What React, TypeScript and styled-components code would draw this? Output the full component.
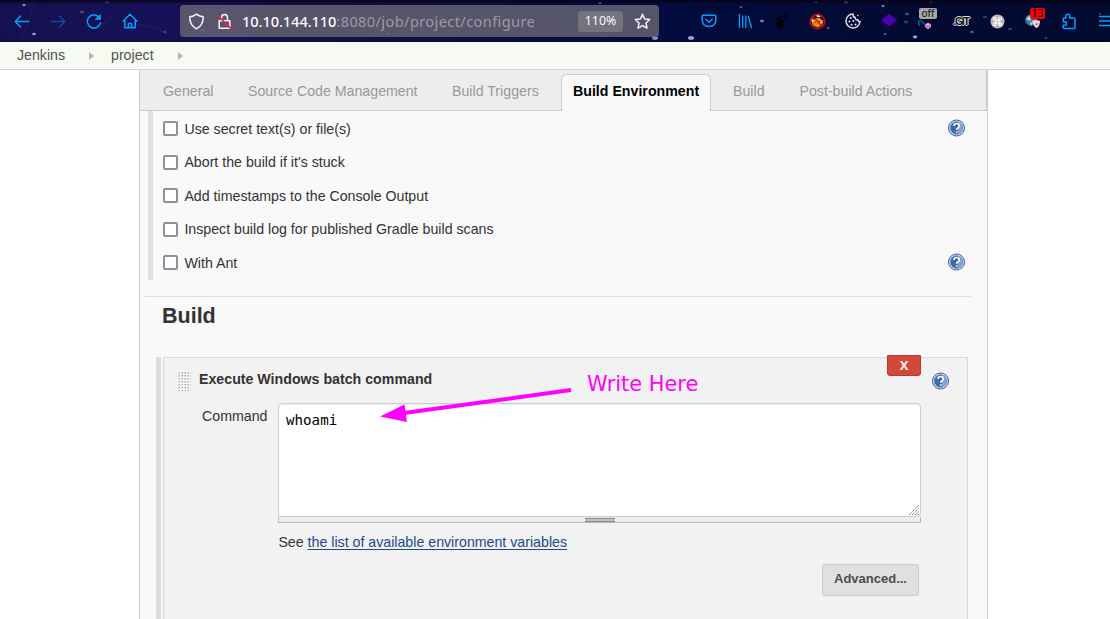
import React from 'react';
import styled, { createGlobalStyle } from 'styled-components';

const GlobalStyle = createGlobalStyle`
  * { box-sizing: border-box; }
  body { margin: 0; background: #fff; overflow: hidden; }
  #root { font-family: "Liberation Sans", Arial, sans-serif; font-size: 14.2px; color: #333; }
`;

const Page = styled.div`
  position: relative;
  width: 1110px;
  height: 619px;
  overflow: hidden;
  display: flex;
  flex-direction: column;
`;

/* Browser toolbar */
const Toolbar = styled.header`
  position: relative;
  flex: none;
  height: 42px;
  display: flex;
  align-items: center;
  padding-left: 4px;
  background: linear-gradient(90deg, #15104f 0, #171259 210px, #101047 420px, #060d45 570px, #030b3c 720px, #030a32 900px, #020a30 100%);
  &::after {
    content: "";
    position: absolute;
    inset: 0;
    background: linear-gradient(180deg, rgba(8, 0, 20, .85) 0, rgba(8, 0, 20, .6) 2px, transparent 4px, transparent 39px, rgba(0, 0, 20, .35) 42px);
  }
`;

const Stars = styled.svg`
  position: absolute;
  left: 0;
  top: 0;
`;

const Slot = styled.div`
  position: relative;
  flex: none;
  width: 36px;
  height: 42px;
  display: flex;
  align-items: center;
  justify-content: center;
  svg { display: block; }
`;

const AddressBar = styled.div`
  position: relative;
  flex: none;
  width: 479px;
  height: 32px;
  margin: 0 32px 0 32px;
  display: flex;
  align-items: center;
  border-radius: 4px;
  background: rgba(101, 99, 112, .84);
  padding-left: 8px;
`;

const UrlIcon = styled.span<{ $gap: number }>`
  display: flex;
  margin-right: ${(p) => p.$gap}px;
`;

const Url = styled.div`
  width: 336px;
  white-space: nowrap;
  font: 14.6px/20px "Noto Sans", sans-serif;
  letter-spacing: .38px;
  color: #9b9aa5;
`;

const Host = styled.span`
  color: #fbfbfe;
  font-weight: 500;
  letter-spacing: -.08px;
`;

const Zoom = styled.div`
  width: 45px;
  height: 21px;
  border-radius: 3px;
  background: #74737f;
  color: #fbfbfe;
  font: 12.3px/20px "Noto Sans", sans-serif;
  text-align: center;
  margin-right: 11px;
`;

const Badge = styled.span<{ $red?: boolean }>`
  position: absolute;
  top: 8px;
  left: ${(p) => (p.$red ? 15 : 12)}px;
  width: ${(p) => (p.$red ? 15 : 18)}px;
  height: 11px;
  border-radius: 2px;
  background: ${(p) => (p.$red ? '#f00404' : '#a6a6a6')};
  color: ${(p) => (p.$red ? '#300' : '#111')};
  font: 10px/11px "Noto Sans", sans-serif;
  text-align: center;
`;

const GitMark = styled.span`
  font: bold 10.5px/16px "Liberation Sans", sans-serif;
  letter-spacing: -1.2px;
  color: #111;
  text-shadow: -1px 0 #ddd, 1px 0 #ddd, 0 -1px #ddd, 0 1px #ddd;
`;

/* Breadcrumbs */
const Breadcrumbs = styled.nav`
  flex: none;
  height: 28px;
  display: flex;
  align-items: center;
  padding: 0 0 1px 17px;
  background: #f6faf2;
  border-bottom: 1px solid #d3d7cf;
  color: #4f5350;
`;

const Crumb = styled.span<{ $width: number }>`
  width: ${(p) => p.$width}px;
`;

const CrumbArrow = styled.span`
  margin: 2px 17px 0 0;
  border-left: 5px solid #b5b8b5;
  border-top: 4px solid transparent;
  border-bottom: 4px solid transparent;
`;

/* Job configuration panel */
const Panel = styled.main`
  width: 849px;
  margin-left: 139px;
  flex: 1;
  background: #f9f9f9;
  border: solid #ccc;
  border-width: 0 1px;
`;

const TabBar = styled.div`
  height: 41px;
  display: flex;
  align-items: flex-end;
  padding-left: 11px;
  background: #ededed;
  border-bottom: 1px solid #ccc;
  border-right: 1px solid #ccc;
`;

const Tab = styled.button<{ $width: number; $active?: boolean }>`
  flex: none;
  width: ${(p) => p.$width}px;
  height: 37px;
  padding: 0 11px 5px;
  margin: ${(p) => (p.$active ? '0 10px -1px 11px' : '0 0 -1px')};
  border: 1px solid ${(p) => (p.$active ? '#ccc' : 'transparent')};
  border-bottom: 0;
  border-radius: 6px 6px 0 0;
  background: ${(p) => (p.$active ? '#f9f9f9' : 'transparent')};
  color: ${(p) => (p.$active ? '#000' : '#999')};
  font: ${(p) => (p.$active ? 'bold' : 'normal')} 14.2px "Liberation Sans", Arial, sans-serif;
  text-align: left;
  white-space: nowrap;
`;

const Options = styled.div`
  height: 169px;
  margin-left: 8px;
  border-left: 5px solid #e0e0e0;
  padding: 1px 22px 0 10px;
`;

const OptionRow = styled.label`
  display: flex;
  align-items: center;
  height: 33.5px;
`;

const Checkbox = styled.input`
  appearance: none;
  width: 15px;
  height: 15px;
  margin: 0 6.400px 0 0;
  background: #fff;
  border: 2px solid #8f8f9d;
  border-radius: 2px;
`;

const HelpButton = styled.span`
  display: flex;
  margin-left: auto;
  padding-bottom: 2px;
`;

const SectionTitle = styled.h2`
  margin: 16px 16px 0 5px;
  padding: 6px 0 0 17px;
  height: 61px;
  border-top: 1px solid #ddd;
  font-size: 21.500px;
  line-height: 26px;
`;

const Builder = styled.section`
  width: 812px;
  height: 280px;
  margin-left: 16px;
  border-left: 5px solid #dedede;
  padding-left: 2px;
`;

const BuilderBox = styled.div`
  position: relative;
  height: 100%;
  background: #f2f2f2;
  border: 1px solid #d9d9d9;
`;

const BuilderHead = styled.div`
  display: flex;
  height: 45px;
  padding: 13px 18px 0 13px;
  font-weight: bold;
  line-height: 17px;
  svg { flex: none; }
`;

const BuilderTitle = styled.span`
  margin-left: 8px;
`;

const BuilderHelp = styled.span`
  margin: 1px 0 0 auto;
`;

const DeleteButton = styled.button`
  position: absolute;
  top: -3px;
  right: 46px;
  width: 34px;
  height: 21px;
  padding: 0 0 1px;
  border: 1px solid #b93a2c;
  border-radius: 0 0 3px 3px;
  background: #d24939;
  color: #f6eded;
  font: bold 13px/18px "Noto Sans", sans-serif;
`;

const Field = styled.div`
  display: flex;
  padding-left: 38px;
`;

const FieldLabel = styled.label`
  width: 76px;
  padding-top: 5px;
  line-height: 17px;
`;

const FieldBody = styled.div`
  width: 643px;
`;

const EditorBox = styled.div`
  position: relative;
  height: 114px;
  border: 1px solid #ccc;
  border-radius: 4px;
  background: #fff;
  box-shadow: inset 0 1px 1px rgba(0, 0, 0, .075);
  padding: 8px 7px;
  color: #000;
  font: 14.2px/17px "DejaVu Sans Mono", monospace;
  svg { position: absolute; right: 1px; bottom: 1px; }
`;

const ResizeBar = styled.div`
  height: 6px;
  padding-top: 1px;
  background: #ededed;
  border: 1px solid #bbbbb5;
  border-top: 0;
`;

const ResizeGrip = styled.div`
  width: 30px;
  height: 4px;
  margin: 0 auto;
  background: #c4c4c4;
  border: solid #888;
  border-width: 1px 0;
`;

const Hint = styled.p`
  margin: 10px 0 0;
  padding-left: .4px;
  line-height: 18px;
`;

const HintLink = styled.a`
  color: #204a87;
  text-decoration: underline;
  text-underline-offset: 2px;
  text-decoration-thickness: 1px;
`;

const AdvancedButton = styled.button`
  display: block;
  width: 97px;
  height: 32px;
  margin: 13px 2px 0 auto;
  padding: 0 0 3px;
  border: 1px solid #ccc;
  border-radius: 3px;
  background: #e0e0e0;
  color: #4d4d4d;
  font: bold 13px "Liberation Sans", Arial, sans-serif;
`;

const Annotation = styled.div`
  position: absolute;
  left: 380px;
  top: 371px;
  display: flex;
  color: #ff00ff;
  font: 20.9px/26px "DejaVu Sans", sans-serif;
  white-space: nowrap;
  svg { margin-right: 14px; }
`;

const starPoints: [number, number, number, number][] = [
  [24, 5, 1.8, 0.65], [34, 34, 1.8, 0.9], [107, 2, 2, 0.5], [82, 12, 2.2, 0.3], [165, 32, 2, 0.25], [203, 31, 3, 0.4],
  [235, 16, 2, 0.3], [387, 34, 1.8, 0.5], [600, 3, 1.5, 0.6], [627, 22, 2, 0.25], [655, 38, 3, 0.8], [691, 38, 3, 0.9],
  [741, 7, 1.5, 0.5], [762, 21, 2, 0.7], [816, 2, 1.6, 0.5], [828, 28, 1.5, 0.5], [846, 2, 2.3, 0.45], [883, 6, 1.5, 0.8],
  [907, 14, 2.2, 0.35], [906, 22, 2.2, 0.3], [885, 34, 1.6, 0.5], [915, 37, 2.2, 0.9], [972, 32, 2, 0.45], [985, 17, 2, 0.3],
  [931, 2, 1.2, 0.6], [1010, 29, 2, 0.3], [1046, 38, 1.6, 0.3], [1100, 14, 1.4, 0.3],
];

const Sky = () => (
  <Stars width="1110" height="42">
    <path d="M102 24l10-7M117 33l12-8M136 24q15 1 32 10M35 0l-6 20-8 20" stroke="#3b318d" strokeWidth="2" opacity=".2" fill="none" />
    {starPoints.map(([x, y, r, o]) => (
      <ellipse key={`${x}-${y}`} cx={x} cy={y} rx={r} ry={r * 0.65} fill="#aab4ee" opacity={o} />
    ))}
  </Stars>
);

const line = { fill: 'none', strokeWidth: 1.5, strokeLinecap: 'round', strokeLinejoin: 'round' } as const;
const BLUE = '#00a2ff';

const Arrow = ({ forward }: { forward?: boolean }) => (
  <svg width="16" height="16" viewBox="0 0 16 16" {...line} stroke={forward ? '#0e4c9c' : BLUE}>
    <path d={forward ? 'M1.5 8.5h13M9.5 3l5.2 5.5-5.2 5.5' : 'M14.5 8.5h-13M6.5 3L1.3 8.5 6.5 14'} />
  </svg>
);

const Help = () => (
  <svg width="17" height="18" viewBox="0 0 17 18">
    <circle cx="8.5" cy="9" r="8" fill="#e4ecf6" stroke="#315b98" />
    <circle cx="8.5" cy="9" r="6.4" fill="#3f69a6" stroke="#7a9bc8" strokeWidth=".8" />
    <path d="M10 3a6.3 6.3 0 010 12z" fill="#82a3d0" />
    <path d="M6 7q0-2.5 2.6-2.5T11.2 7q0 1.3-1.4 2Q8.7 9.6 8.7 10.7M8.7 12.2v1.6" fill="none" stroke="#fff" strokeWidth="1.7" />
  </svg>
);

const DragHandle = () => (
  <svg width="14" height="20">
    <defs>
      <pattern id="dots" width="3" height="3" patternUnits="userSpaceOnUse">
        <rect width="3" height="3" fill="#fbfbfa" />
        <rect x="1" y="1" width="2" height="2" fill="#d6d6d2" />
        <rect x="2" y="1" width="1" height="1" fill="#a2a29e" />
      </pattern>
    </defs>
    <rect width="14" height="20" fill="url(#dots)" />
  </svg>
);

const tabs = [
  { label: 'General', width: 85 },
  { label: 'Source Code Management', width: 204 },
  { label: 'Build Triggers', width: 110 },
  { label: 'Build Environment', width: 150, active: true },
  { label: 'Build', width: 66.5 },
  { label: 'Post-build Actions', width: 140 },
];

const options = [
  { label: 'Use secret text(s) or file(s)', help: true },
  { label: "Abort the build if it's stuck" },
  { label: 'Add timestamps to the Console Output' },
  { label: 'Inspect build log for published Gradle build scans' },
  { label: 'With Ant', help: true },
];

const BrowserToolbar = () => (
  <Toolbar>
    <Sky />
    <Slot><Arrow /></Slot>
    <Slot><Arrow forward /></Slot>
    <Slot>
      <svg width="16" height="16" viewBox="0 0 16 16" {...line} stroke={BLUE}>
        <path d="M13.6 5A6.6 6.6 0 1014.4 10" />
        <path d="M14.4 1.8v4.7H9.7z" fill={BLUE} strokeWidth=".8" />
      </svg>
    </Slot>
    <Slot>
      <svg width="16" height="16" viewBox="0 0 16 16" {...line} stroke={BLUE}>
        <path d="M1 8.3L8 1.2l7 7.1M2.7 7v7.8h10.6V7M6.4 14.5v-3.2q0-1.1 1.6-1.1t1.6 1.1v3.2" />
      </svg>
    </Slot>
    <AddressBar>
      <UrlIcon $gap={12}>
        <svg width="17" height="17" viewBox="0 0 17 17" {...line} stroke="#f3f3f7">
          <path d="M8.500 1.200q3.100 2.500 6.700 2.500.3 8.500-6.700 12.100Q1.500 12.200 1.800 3.700q3.600 0 6.700-2.500z" />
        </svg>
      </UrlIcon>
      <UrlIcon $gap={10}>
        <svg width="15" height="17" viewBox="0 0 15 17" {...line} stroke="#f3f3f7">
          <path d="M2.200 7.800h10.600v7.500H2.200zM4.500 7.500V4.800q0-3.300 3-3.300t3 3.300v2.700" />
          <path d="M1 2.600l13 13" stroke="#f21c49" />
        </svg>
      </UrlIcon>
      <Url><Host>10.10.144.110</Host>:8080/job/project/configure</Url>
      <Zoom>110%</Zoom>
      <svg width="17" height="17" viewBox="0 0 17 17" {...line} stroke="#f3f3f7">
        <path d="M8.500 1.200l2.100 4.700 5.100.6-3.700 3.500 1 5.200-4.500-2.600L4 15.200l1-5.200-3.700-3.500 5.100-.6z" />
      </svg>
    </AddressBar>
    <Slot>
      <svg width="16" height="16" viewBox="0 0 16 16" {...line} stroke={BLUE}>
        <path d="M2.200 2.300h11.600q1 0 1 1v3.500q0 6.500-6.800 6.800Q1.200 13.300 1.200 6.800V3.300q0-1 1-1zM4.800 6.300L8 9.300l3.200-3" />
      </svg>
    </Slot>
    <Slot>
      <svg width="16" height="16" viewBox="0 0 16 16" {...line} strokeWidth={1.3} stroke={BLUE}>
        <path d="M2.500 1.500v13M5.700 3v11.500M8.900 3v11.500M11.300 3.500l3.200 11" />
      </svg>
    </Slot>
    <Slot>
      <svg width="13" height="16" viewBox="0 0 13 16" fill="#02030c">
        <path d="M2 8q1-2 4.200-2 3.800 0 3.200 2.600Q9 10 7.500 10.300q.5 1.500 2.500.7-1 4.500-5 4.300Q2.400 15 1.400 12 .8 9.800 2 8z" />
        <ellipse cx="10.500" cy="3.200" rx="1.700" ry="2.500" transform="rotate(15 10.500 3.200)" />
        <ellipse cx="6.900" cy="3.300" rx="1.100" ry="1.700" />
        <ellipse cx="4.200" cy="4.500" rx="1" ry="1.400" />
        <ellipse cx="1.800" cy="6" rx=".9" ry="1.200" />
      </svg>
    </Slot>
    <Slot>
      <svg width="17" height="17" viewBox="0 0 17 17">
        <path d="M2.500 8l3-2.500 5-.5 4 3-1.500 4.500-4.500 2-4.500-2z" fill="#ef8b0b" />
        <path d="M2.500 5l1.500 1.500 1 2.500-2.500-.5zM10 9.500l3-1-2 3zM6.500 2.500l3-.5 2.500 1.500-3 1z" fill="#fbe1ba" />
        <circle cx="8.500" cy="8.500" r="7.200" fill="none" stroke="#cf0b18" strokeWidth="1.500" />
        <path d="M3.300 3.300l10.400 10.400" stroke="#cf0b18" strokeWidth="1.500" />
        <path d="M5.500 9.500h1.200M10 9h1.200" stroke="#321" />
      </svg>
    </Slot>
    <Slot>
      <svg width="16" height="16" viewBox="0 0 16 16" {...line} stroke="#dedee7">
        <path d="M8 1a7 7 0 107 7.500q-2 .3-2.200-1.800-2.600.4-2.600-2.200Q7.800 4 8 1z" />
        <path d="M5.700 5h.1M4.300 8.500h.1M8.300 8h.1M6.500 11.800h.1M10.500 11.500h.1" strokeWidth="2" />
        <path d="M12.800 2.500h.1" />
      </svg>
    </Slot>
    <Slot>
      <svg width="16" height="16" viewBox="0 0 16 16">
        <path d="M0 8l8 7.500L16 8v2l-8 6-8-6z" fill="#290079" />
        <path d="M8 .8L16 7l-8 6.200L0 7z" fill="#4805ae" />
      </svg>
    </Slot>
    <Slot>
      <svg width="18" height="18" viewBox="0 0 18 18">
        <path d="M3 8v6M4 8l6 5" stroke="#07497f" strokeWidth="2" />
        <path d="M9 12l3-1 3 1v3l-3 2.500L9 15z" fill="#da78c3" />
        <path d="M11 12h2" stroke="#fff" />
      </svg>
      <Badge>off</Badge>
    </Slot>
    <Slot><GitMark>.GIT</GitMark></Slot>
    <Slot>
      <svg width="15" height="15" viewBox="0 0 15 15">
        <circle cx="7.500" cy="7.500" r="7" fill="#b9b9b9" />
        <path d="M6 6H5a1.300 1.300 0 111-1v5a1.300 1.300 0 11-1-1h5a1.300 1.300 0 11-1 1V5a1.300 1.300 0 111 1z" fill="none" stroke="#fff" strokeWidth="1.100" />
      </svg>
    </Slot>
    <Slot>
      <svg width="16" height="16" viewBox="0 0 16 16">
        <circle cx="6" cy="7" r="5.800" fill="#397a9e" />
        <path d="M1 6l3-3 3 1-2 4zM5 9l3 1-2 3z" fill="#bed8df" />
        <path d="M7 8q4-2 8 0 0 5-3 7-3 0-5-7z" fill="#ead2df" />
        <path d="M10 11l3-1-1 3z" fill="#a95b85" />
      </svg>
      <Badge $red>13</Badge>
    </Slot>
    <Slot>
      <svg width="16" height="17" viewBox="0 0 16 17" {...line} stroke={BLUE}>
        <path d="M4.800 5V3.200q0-2 1.900-2t1.900 2V5h4.500q.9 0 .9.900v8.700q0 .9-.9.900H3.200q-.9 0-.9-.9v-2.400h1.400q1.900 0 1.900-1.700T3.700 8.800H2.300V5.900q0-.9.900-.9z" />
      </svg>
    </Slot>
    <Slot>
      <svg width="14" height="14" viewBox="0 0 14 14" {...line} stroke={BLUE}>
        <path d="M1.500 2.500h13M1.500 7h13M1.500 11.500h13" />
      </svg>
    </Slot>
  </Toolbar>
);

export default function App() {
  return (
    <Page>
      <GlobalStyle />
      <BrowserToolbar />
      <Breadcrumbs>
        <Crumb $width={72}>Jenkins</Crumb>
        <CrumbArrow />
        <Crumb $width={67}>project</Crumb>
        <CrumbArrow />
      </Breadcrumbs>
      <Panel>
        <TabBar>
          {tabs.map((t) => (
            <Tab key={t.label} $width={t.width} $active={t.active}>{t.label}</Tab>
          ))}
        </TabBar>
        <Options>
          {options.map((o) => (
            <OptionRow key={o.label}>
              <Checkbox type="checkbox" />
              {o.label}
              {o.help && <HelpButton><Help /></HelpButton>}
            </OptionRow>
          ))}
        </Options>
        <SectionTitle>Build</SectionTitle>
        <Builder>
          <BuilderBox>
            <DeleteButton>X</DeleteButton>
            <BuilderHead>
              <DragHandle />
              <BuilderTitle>Execute Windows batch command</BuilderTitle>
              <BuilderHelp><Help /></BuilderHelp>
            </BuilderHead>
            <Field>
              <FieldLabel>Command</FieldLabel>
              <FieldBody>
                <EditorBox>
                  whoami
                  <svg width="11" height="11" viewBox="0 0 11 11" stroke="#777" strokeDasharray="1.400 .5">
                    <path d="M1 11L11 1M4 11l7-7M7 11l4-4M9.500 11l1.500-1.500" />
                  </svg>
                </EditorBox>
                <ResizeBar><ResizeGrip /></ResizeBar>
                <Hint>See <HintLink>the list of available environment variables</HintLink></Hint>
                <AdvancedButton>Advanced...</AdvancedButton>
              </FieldBody>
            </Field>
          </BuilderBox>
        </Builder>
      </Panel>
      <Annotation>
        <svg width="193" height="54" viewBox="0 0 193 54">
          <path d="M24 42L191 19" stroke="#f0f" strokeWidth="4" />
          <path d="M0 45.500l24.500-12L27 51z" fill="#f0f" />
        </svg>
        Write Here
      </Annotation>
    </Page>
  );
}
